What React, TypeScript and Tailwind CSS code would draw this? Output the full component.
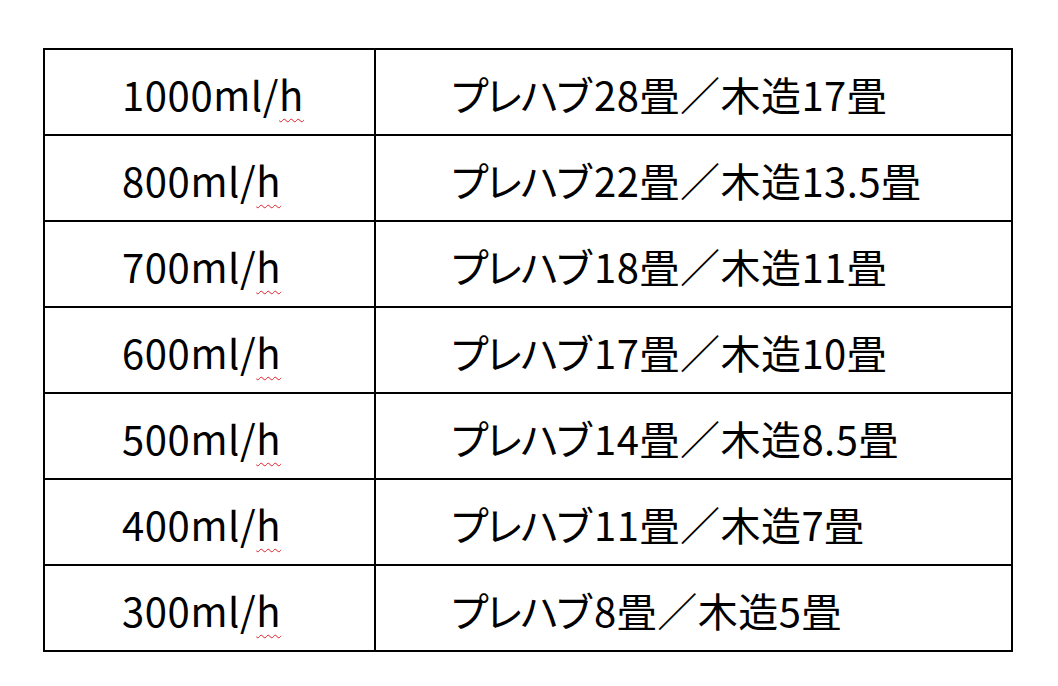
const rows: [string, string][] = [
  ["1000ml/", "28畳／木造17畳"],
  ["800ml/", "22畳／木造13.5畳"],
  ["700ml/", "18畳／木造11畳"],
  ["600ml/", "17畳／木造10畳"],
  ["500ml/", "14畳／木造8.5畳"],
  ["400ml/", "11畳／木造7畳"],
  ["300ml/", "8畳／木造5畳"],
]

export default function App() {
  return (
    <main
      className="w-[1058px] h-[686px] bg-white text-black pt-[48px] pl-[43px]"
      style={{ fontFamily: '"Noto Sans CJK JP", "Noto Sans", sans-serif' }}
    >
      <table className="border-collapse border-2 border-black w-[970px] table-fixed">
        <colgroup>
          <col className="w-[331px]" />
          <col />
        </colgroup>
        <tbody>
          {rows.map(([rate, size], i) => (
            <tr key={i} className="h-[86px]">
              <td className="border-2 border-black pl-[77px] pt-[4px] text-[40px] leading-none align-middle tracking-[0.6px]">
                {rate}
                <span className="underline decoration-wavy decoration-[#e0202a] decoration-1 underline-offset-[7px]">h</span>
              </td>
              <td className="border-2 border-black pl-[73px] pt-[4px] text-[40px] leading-none align-middle whitespace-nowrap">
                <span className="tracking-[-5px]">プレハブ</span>
                <span className="pl-[5px] tracking-[0.5px]">{size}</span>
              </td>
            </tr>
          ))}
        </tbody>
      </table>
    </main>
  )
}
